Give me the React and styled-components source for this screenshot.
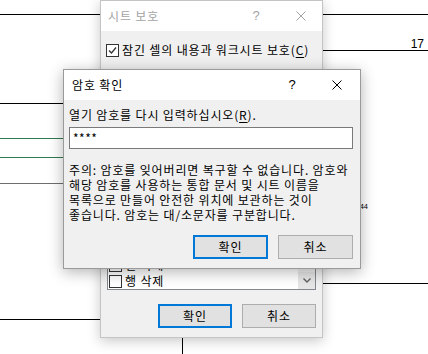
import React from "react";
import styled, { createGlobalStyle } from "styled-components";

const GlobalStyle = createGlobalStyle`
  html, body { margin: 0; padding: 0; background: #fff; }
  body { font-family: "Noto Sans CJK KR", "Noto Sans", sans-serif; }
`;

const Desktop = styled.div`
  position: relative;
  width: 428px;
  height: 354px;
  overflow: hidden;
  background: #fff;
`;

const SheetDrawing = styled.svg`
  position: absolute;
  left: 0;
  top: 0;
`;

const CellText = styled.text`
  font-family: "Liberation Sans", Arial, sans-serif;
  fill: #000;
`;

const Dialog = styled.div`
  position: absolute;
  left: ${(p) => p.$left}px;
  top: ${(p) => p.$top}px;
  width: ${(p) => p.$width}px;
  height: ${(p) => p.$height}px;
  box-sizing: border-box;
  display: flex;
  flex-direction: column;
  background: #f0f0f0;
  border: 1px solid ${(p) => (p.$active ? "#9a9a9a" : "#c4c4c4")};
  box-shadow: ${(p) =>
    p.$active ? "0 3px 14px rgba(0,0,0,0.30)" : "0 3px 12px rgba(0,0,0,0.22)"};
  font-size: 12px;
  letter-spacing: 0.85px;
  color: #000;
`;

const TitleBar = styled.div`
  flex: none;
  height: 30px;
  display: flex;
  align-items: center;
  background: #fff;
  padding-left: ${(p) => p.$padLeft}px;
  color: ${(p) => (p.$active ? "#000" : "#a3a3a3")};
`;

const Title = styled.span`
  flex: 1;
  line-height: 16px;
`;

const HelpGlyph = styled.span`
  width: 8px;
  text-align: center;
  margin-right: 36px;
  font-family: "Liberation Sans", Arial, sans-serif;
  font-size: 13px;
  letter-spacing: 0;
  line-height: 16px;
`;

const CloseIcon = styled.svg`
  flex: none;
  margin-right: ${(p) => p.$gap}px;
`;

const Body = styled.div`
  flex: 1;
  display: flex;
  flex-direction: column;
  padding: ${(p) => p.$pad};
  min-height: 0;
`;

const Label = styled.div`
  line-height: 16px;
  white-space: nowrap;
`;

const Key = styled.span`
  text-decoration: underline;
  text-underline-offset: 2px;
`;

const PasswordField = styled.div`
  margin-top: 4px;
  height: 22px;
  box-sizing: border-box;
  border: 1px solid #7a7a7a;
  background: #fff;
  padding-left: 3px;
  display: flex;
  align-items: center;
  line-height: 14px;
  letter-spacing: 0.5px;
`;

const Notice = styled.p`
  margin: 13px 0 0;
  line-height: 15px;
  white-space: nowrap;
`;

const ButtonRow = styled.div`
  margin-top: auto;
  display: flex;
  justify-content: flex-end;
  gap: ${(p) => p.$gap}px;
`;

const Button = styled.button`
  width: ${(p) => p.$w}px;
  height: 24px;
  box-sizing: border-box;
  padding: 0;
  background: #e1e1e1;
  border: ${(p) => (p.$default ? "2px solid #0078d7" : "1px solid #adadad")};
  font-family: "Noto Sans CJK KR", "Noto Sans", sans-serif;
  font-size: 12px;
  letter-spacing: 0.85px;
  color: #000;
  line-height: 16px;
`;

const CheckRow = styled.div`
  display: flex;
  align-items: center;
  gap: 3px;
  height: 16px;
  line-height: 16px;
  white-space: nowrap;
`;

const Box = styled.span`
  flex: none;
  width: 13px;
  height: 13px;
  box-sizing: border-box;
  border: 1px solid #333;
  background: #fff;
  display: flex;
  align-items: center;
  justify-content: center;
`;

const ListBox = styled.div`
  flex: 1;
  min-height: 0;
  margin: 0 0 14px 1px;
  display: flex;
  border: 1px solid #828790;
  background: #fff;
`;

const ListItems = styled.div`
  flex: 1;
  display: flex;
  flex-direction: column;
  justify-content: flex-end;
  overflow: hidden;
  padding-left: 1px;
`;

const ListItem = styled(CheckRow)`
  flex: none;
`;

const ScrollTrack = styled.div`
  flex: none;
  width: 17px;
  background: #f0f0f0;
  display: flex;
  flex-direction: column;
  justify-content: flex-end;
`;

const ArrowButton = styled.div`
  height: 17px;
  display: flex;
  align-items: center;
  justify-content: center;
  background: #e6e6e6;
`;

const CheckMark = () => (
  <svg width="9" height="9" viewBox="0 0 9 9">
    <path d="M1 4.5 L3.5 7 L8 1.5" fill="none" stroke="#333" strokeWidth="1.3" />
  </svg>
);

const Close = ({ gap, color }) => (
  <CloseIcon $gap={gap} width="10" height="10" viewBox="0 0 10 10">
    <path d="M0.5 0.5 L9.5 9.5 M9.5 0.5 L0.5 9.5" stroke={color} strokeWidth="1" />
  </CloseIcon>
);

const listItems = ["열 삭제", "행 삭제"];

export default function App() {
  return (
    <>
      <GlobalStyle />
      <Desktop>
        <SheetDrawing width="428" height="354" viewBox="0 0 428 354">
          <g stroke="#000" strokeWidth="1" shapeRendering="crispEdges">
            <line x1="0" y1="14.5" x2="428" y2="14.5" />
            <line x1="200" y1="50.5" x2="428" y2="50.5" />
            <line x1="0" y1="103.5" x2="120" y2="103.5" />
            <line x1="200" y1="283.5" x2="428" y2="283.5" />
            <line x1="0" y1="319.5" x2="120" y2="319.5" />
            <line x1="182.5" y1="300" x2="182.5" y2="354" />
          </g>
          <g stroke="#2f7a50" strokeWidth="1" shapeRendering="crispEdges">
            <line x1="0" y1="138.5" x2="120" y2="138.5" />
            <line x1="0" y1="157.5" x2="120" y2="157.5" />
          </g>
          <line x1="0" y1="183.5" x2="120" y2="183.5" stroke="#6e6e6e" strokeWidth="1" shapeRendering="crispEdges" />
          <CellText x="424" y="48" fontSize="12" textAnchor="end">17</CellText>
          <CellText x="368" y="209" fontSize="7.5" textAnchor="end">44</CellText>
        </SheetDrawing>

        <Dialog $left={100} $top={0} $width={223} $height={338}>
          <TitleBar $padLeft={7}>
            <Title>시트 보호</Title>
            <HelpGlyph>?</HelpGlyph>
            <Close gap={16} color="#a3a3a3" />
          </TitleBar>
          <Body $pad="11px 6px 9px 5px">
            <CheckRow>
              <Box>
                <CheckMark />
              </Box>
              <span>
                잠긴 셀의 내용과 워크시트 보호(<Key>C</Key>)
              </span>
            </CheckRow>
            <ListBox style={{ marginTop: 20 }}>
              <ListItems>
                {listItems.map((t) => (
                  <ListItem key={t}>
                    <Box />
                    <span>{t}</span>
                  </ListItem>
                ))}
              </ListItems>
              <ScrollTrack>
                <ArrowButton>
                  <svg width="8" height="5" viewBox="0 0 8 5">
                    <path d="M0.5 0.5 L4 4 L7.5 0.5" fill="none" stroke="#606060" strokeWidth="1.4" />
                  </svg>
                </ArrowButton>
              </ScrollTrack>
            </ListBox>
            <ButtonRow $gap={10}>
              <Button $w={74} $default>확인</Button>
              <Button $w={74}>취소</Button>
            </ButtonRow>
          </Body>
        </Dialog>

        <Dialog $left={63} $top={69} $width={298} $height={200} $active>
          <TitleBar $padLeft={8} $active>
            <Title>암호 확인</Title>
            <HelpGlyph>?</HelpGlyph>
            <Close gap={18} color="#000" />
          </TitleBar>
          <Body $pad="7px 7px 9px 5px">
            <Label>
              열기 암호를 다시 입력하십시오(<Key>R</Key>).
            </Label>
            <PasswordField>****</PasswordField>
            <Notice>
              주의: 암호를 잊어버리면 복구할 수 없습니다. 암호와
              <br />
              해당 암호를 사용하는 통합 문서 및 시트 이름을
              <br />
              목록으로 만들어 안전한 위치에 보관하는 것이
              <br />
              좋습니다. 암호는 대/소문자를 구분합니다.
            </Notice>
            <ButtonRow $gap={10}>
              <Button $w={75} $default>확인</Button>
              <Button $w={75}>취소</Button>
            </ButtonRow>
          </Body>
        </Dialog>
      </Desktop>
    </>
  );
}
